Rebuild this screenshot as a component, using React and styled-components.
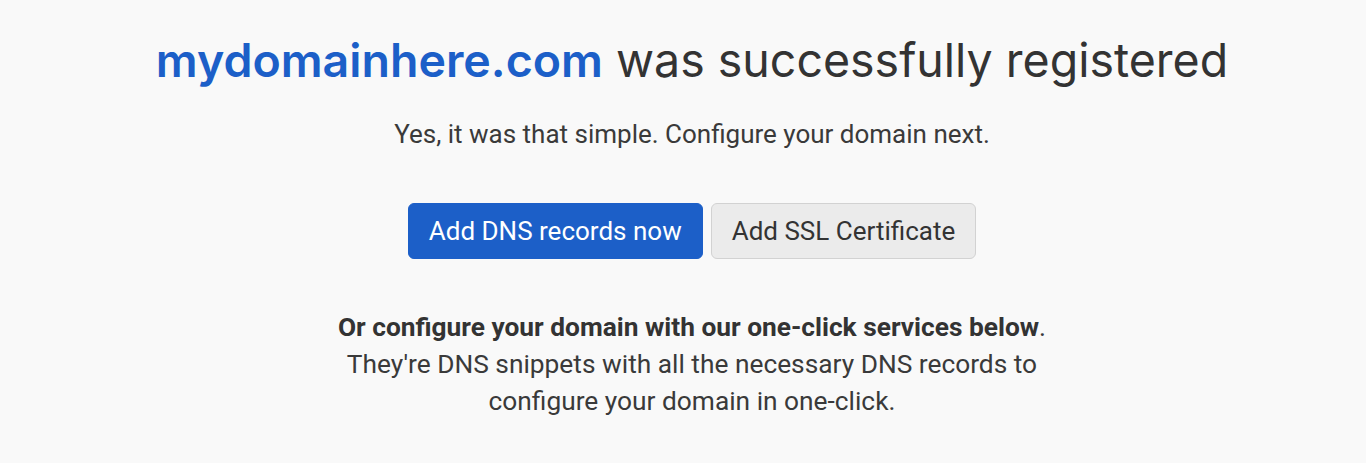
import React from 'react'
import styled, { createGlobalStyle } from 'styled-components'

const GlobalStyle = createGlobalStyle`
  html, body {
    margin: 0;
    padding: 0;
    background: #f9f9f9;
  }
`

const Page = styled.main`
  display: flex;
  flex-direction: column;
  align-items: center;
  padding: 28px 0 0 18px;
  min-height: 463px;
  box-sizing: border-box;
  background: #f9f9f9;
  font-family: Roboto, "Liberation Sans", sans-serif;
  color: #333;
`

const Title = styled.h1`
  margin: 0;
  font-family: Inter, "Liberation Sans", sans-serif;
  font-weight: 400;
  font-size: 46.5px;
  line-height: 64px;
  color: #333;
`

const Domain = styled.span`
  color: #1c5fc8;
  font-weight: 600;
`

const Lead = styled.p`
  margin: 26px 0 0;
  font-size: 26px;
  line-height: 32px;
  color: #3a3a3a;
`

const Actions = styled.div`
  display: flex;
  gap: 8px;
  margin-top: 53px;
`

const Button = styled.button`
  height: 56px;
  padding: 0 20px;
  border-radius: 6px;
  font-family: Roboto, "Liberation Sans", sans-serif;
  font-size: 26px;
  cursor: pointer;
  border: 1px solid ${props => props.primary ? '#1c5fc8' : '#d2d2d2'};
  background: ${props => props.primary ? '#1c5fc8' : '#ebebeb'};
  color: ${props => props.primary ? '#fff' : '#333'};
`

const Note = styled.div`
  margin-top: 50px;
  text-align: center;
  font-size: 26.3px;
  line-height: 37px;
  color: #3a3a3a;
`

const Strong = styled.strong`
  font-weight: 700;
  color: #333;
`

export default function App() {
  return (
    <Page>
      <GlobalStyle />
      <Title>
        <Domain>mydomainhere.com</Domain> was successfully registered
      </Title>
      <Lead>Yes, it was that simple. Configure your domain next.</Lead>
      <Actions>
        <Button primary>Add DNS records now</Button>
        <Button>Add SSL Certificate</Button>
      </Actions>
      <Note>
        <Strong>Or configure your domain with our one-click services below</Strong>.
        <br />
        They're DNS snippets with all the necessary DNS records to
        <br />
        configure your domain in one-click.
      </Note>
    </Page>
  )
}
